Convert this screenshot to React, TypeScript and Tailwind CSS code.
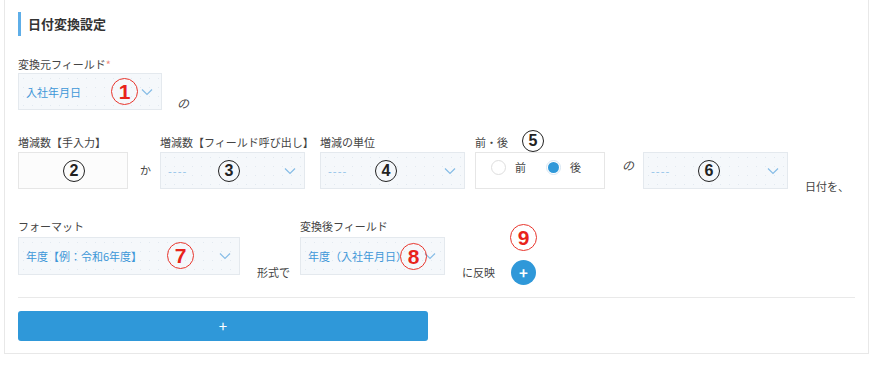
import React from 'react';

const FONT = { fontFamily: '"Noto Sans CJK JP", "Noto Sans", sans-serif' };

// 赤い注釈番号（丸囲み）
function RedMark({ n, className = '' }: { n: string; className?: string }) {
  return (
    <span
      className={`absolute flex items-center justify-center w-[27px] h-[27px] rounded-full border border-[#e8352c] text-[#e8231b] text-[21px] font-bold leading-none ${className}`}
      style={{ fontFamily: '"Liberation Sans", Arial, sans-serif' }}
    >
      {n}
    </span>
  );
}

// 黒い注釈番号（丸囲み）
function BlackMark({ n, className = '' }: { n: string; className?: string }) {
  return (
    <span
      className={`absolute flex items-center justify-center w-[22px] h-[22px] rounded-full border-[1.5px] border-[#222] text-[#222] text-[16px] font-bold leading-none ${className}`}
      style={{ fontFamily: '"Liberation Sans", Arial, sans-serif' }}
    >
      {n}
    </span>
  );
}

function Chevron() {
  return (
    <svg width="12" height="8" viewBox="0 0 12 8" className="absolute right-[8px] top-1/2 -translate-y-1/2">
      <path d="M1 1.5 L6 6.5 L11 1.5" fill="none" stroke="#86bce6" strokeWidth="1.2" />
    </svg>
  );
}

function SelectBox({ width, height = 37, text, dash, children }: any) {
  return (
    <div
      className="relative shrink-0 border border-[#e4e9ee] bg-[#f5f8fb] bg-[radial-gradient(circle,#e2e9f0_0.6px,transparent_0.8px)] bg-[length:9px_9px]"
      style={{ width, height }}
    >
      <span
        className={`absolute left-[7px] top-1/2 -translate-y-1/2 text-[11px] whitespace-nowrap ${dash ? 'text-[#8dc0e8] tracking-[1px]' : 'text-[#3d97d8]'}`}
      >
        {text}
      </span>
      <Chevron />
      {children}
    </div>
  );
}

function Label({ children }: any) {
  return <div className="h-[16px] text-[11px] leading-[16px] text-[#444] whitespace-nowrap">{children}</div>;
}

export default function App() {
  return (
    <div className="w-[870px] h-[373px] bg-white overflow-hidden" style={FONT}>
      <div className="ml-[4px] w-[865px] h-[354px] border-x border-b border-[#e8e8e8] px-[13px] pt-[12px]">
        {/* タイトル */}
        <div className="flex items-center h-[24px] border-l-[3px] border-[#5eaee8] pl-[7px]">
          <span className="text-[13px] font-bold text-[#333]">日付変換設定</span>
        </div>

        {/* 変換元フィールド */}
        <div className="mt-[20px] flex">
          <div className="w-[144px] shrink-0">
            <Label>
              変換元フィールド<span className="text-[#f08a7e]">*</span>
            </Label>
            <div className="mt-[1px]">
              <SelectBox width={144} text="入社年月日">
                <RedMark n="1" className="left-[92px] top-[4px]" />
              </SelectBox>
            </div>
          </div>
          <span className="ml-[15px] self-end text-[12px] text-[#444] italic leading-none mb-[1px]">の</span>
        </div>

        {/* 増減 */}
        <div className="mt-[24px] flex items-start">
          <div className="w-[110px] shrink-0">
            <Label>増減数【手入力】</Label>
            <div className="mt-[2px] relative w-[110px] h-[37px] border border-[#e6e6e6] bg-[#fcfcfc]">
              <BlackMark n="2" className="left-[44px] top-[7px]" />
            </div>
          </div>
          <span className="shrink-0 ml-[12px] mt-[28px] w-[20px] text-[11px] text-[#444]">か</span>
          <div className="w-[145px] shrink-0">
            <Label>増減数【フィールド呼び出し】</Label>
            <div className="mt-[2px]">
              <SelectBox width={145} text="----" dash>
                <BlackMark n="3" className="left-[57px] top-[7px]" />
              </SelectBox>
            </div>
          </div>
          <div className="ml-[15px] w-[145px] shrink-0">
            <Label>増減の単位</Label>
            <div className="mt-[2px]">
              <SelectBox width={145} text="----" dash>
                <BlackMark n="4" className="left-[54px] top-[7px]" />
              </SelectBox>
            </div>
          </div>
          <div className="ml-[10px] w-[130px] shrink-0 relative">
            <Label>前・後</Label>
            <BlackMark n="5" className="left-[47px] -top-[4px]" />
            <div className="mt-[2px] w-[130px] h-[37px] border border-[#e6e6e6] bg-white flex items-start pt-[7px] pl-[15px] text-[11px] text-[#444]">
              <span className="w-[15px] h-[15px] rounded-full border border-[#dedede] bg-white" />
              <span className="ml-[9px] leading-[15px]">前</span>
              <span className="ml-[20px] w-[15px] h-[15px] rounded-full border border-[#d6e6f3] flex items-center justify-center">
                <span className="w-[11px] h-[11px] rounded-full bg-[#2f98d9]" />
              </span>
              <span className="ml-[9px] leading-[15px]">後</span>
            </div>
          </div>
          <span className="shrink-0 ml-[17px] mt-[22px] w-[21px] text-[12px] text-[#444] italic">の</span>
          <div className="mt-[18px] shrink-0">
            <SelectBox width={145} text="----" dash>
              <BlackMark n="6" className="left-[54px] top-[7px]" />
            </SelectBox>
          </div>
          <span className="shrink-0 ml-[17px] mt-[44px] text-[11px] text-[#444] whitespace-nowrap">日付を、</span>
        </div>

        {/* フォーマット */}
        <div className="mt-[23px] flex items-start">
          <div className="w-[222px] shrink-0">
            <Label>フォーマット</Label>
            <div className="mt-[3px]">
              <SelectBox width={222} height={38} text="年度【例：令和6年度】">
                <RedMark n="7" className="left-[148px] top-[4px]" />
              </SelectBox>
            </div>
          </div>
          <span className="shrink-0 ml-[17px] mt-[46px] w-[43px] text-[11px] text-[#444] whitespace-nowrap">形式で</span>
          <div className="w-[145px] shrink-0">
            <Label>変換後フィールド</Label>
            <div className="mt-[3px]">
              <SelectBox width={145} height={38} text="年度（入社年月日）">
                <RedMark n="8" className="left-[99px] top-[5px]" />
              </SelectBox>
            </div>
          </div>
          <span className="shrink-0 ml-[17px] mt-[46px] text-[11px] text-[#444] whitespace-nowrap">に反映</span>
          <div className="ml-[16px] relative mt-[42px] shrink-0">
            <RedMark n="9" className="-left-[1px] -top-[36px]" />
            <button className="w-[25px] h-[25px] rounded-full bg-[#2f98d9] text-white text-[15px] font-bold leading-none flex items-center justify-center">
              +
            </button>
          </div>
        </div>

        {/* 区切り線 */}
        <div className="mt-[12px] border-t border-[#e9e9e9]" />

        <button className="mt-[13px] w-[410px] h-[30px] rounded-[3px] bg-[#2f98d9] text-white text-[15px] leading-none flex items-center justify-center">
          +
        </button>
      </div>
    </div>
  );
}
